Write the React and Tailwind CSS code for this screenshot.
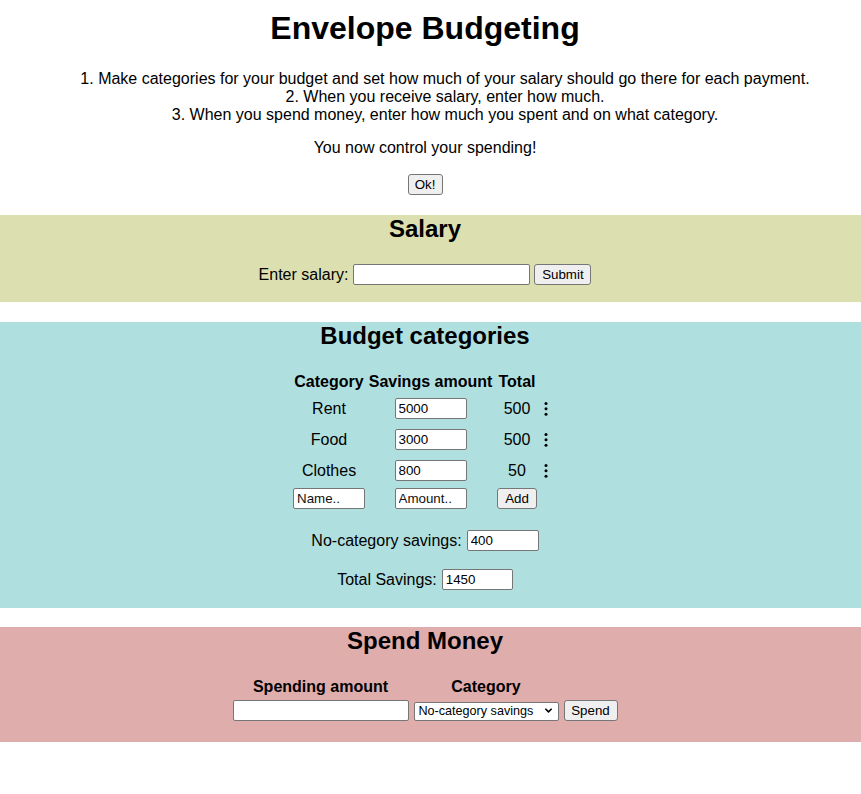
import { useState } from 'react';

const btn =
  'h-[21px] bg-[#efefef] border border-[#767676] rounded-[3px] text-[13.33px] leading-none text-black';
const field =
  'h-[21px] bg-white border border-[#767676] rounded-[2px] px-[3px] text-[13.33px] text-black outline-none placeholder:text-[#111]';

function Kebab() {
  return (
    <svg viewBox="0 0 4 16" className="w-[4px] h-[16px] ml-[3px]">
      <circle cx="2" cy="2.4" r="1.5" fill="#000" />
      <circle cx="2" cy="7.8" r="1.5" fill="#000" />
      <circle cx="2" cy="13.2" r="1.5" fill="#000" />
    </svg>
  );
}

export default function App() {
  const [cats] = useState([
    { name: 'Rent', amount: '5000', total: '500' },
    { name: 'Food', amount: '3000', total: '500' },
    { name: 'Clothes', amount: '800', total: '50' },
  ]);

  return (
    <div className="font-['Liberation_Sans',Arial,sans-serif] text-black text-[16px] pb-[52px]">
      {/* Intro */}
      <div className="w-[850px] text-center pt-[10px]">
        <h1 className="text-[32px] leading-[37px] font-bold">Envelope Budgeting</h1>
        <ol className="mt-[23px] pl-[40px] list-decimal list-inside leading-[18px]">
          <li>Make categories for your budget and set how much of your salary should go there for each payment.</li>
          <li>When you receive salary, enter how much.</li>
          <li>When you spend money, enter how much you spent and on what category.</li>
        </ol>
        <p className="mt-[15px] leading-[18px]">You now control your spending!</p>
        <div className="mt-[17px] flex justify-center">
          <button className={`${btn} w-[35px]`}>Ok!</button>
        </div>
      </div>

      {/* Salary */}
      <section className="mt-[20px] h-[87px] bg-[#dcdfb0]">
        <div className="w-[850px] text-center">
          <h2 className="text-[24px] leading-[28px] font-bold">Salary</h2>
          <div className="mt-[21px] flex items-center justify-center gap-[4.5px]">
            <span className="leading-[18px] mt-[1px]">Enter salary:</span>
            <input className={`${field} w-[177px]`} />
            <button className={`${btn} w-[57px]`}>Submit</button>
          </div>
        </div>
      </section>

      {/* Budget categories */}
      <section className="mt-[20px] h-[286px] bg-[#b0dfdf]">
        <div className="w-[850px] text-center">
          <h2 className="text-[24px] leading-[28px] font-bold">Budget categories</h2>
          <div className="mt-[22px] flex justify-center">
            <div className="grid grid-cols-[74px_125px_44px_17px] grid-rows-[20px_29px_29px_29px_23px] gap-x-[2px] gap-y-[2px] items-center leading-[18px]">
              <div className="font-bold">Category</div>
              <div className="font-bold">Savings amount</div>
              <div className="font-bold">Total</div>
              <div />
              {cats.map((c) => (
                <div key={c.name} className="contents">
                  <div>{c.name}</div>
                  <div className="flex justify-center">
                    <input className={`${field} w-[72px]`} defaultValue={c.amount} />
                  </div>
                  <div>{c.total}</div>
                  <div className="flex">
                    <Kebab />
                  </div>
                </div>
              ))}
              <div className="flex justify-center">
                <input className={`${field} w-[72px]`} placeholder="Name.." />
              </div>
              <div className="flex justify-center">
                <input className={`${field} w-[72px]`} placeholder="Amount.." />
              </div>
              <div className="flex justify-center">
                <button className={`${btn} w-[40px]`}>Add</button>
              </div>
              <div />
            </div>
          </div>
          <div className="mt-[20px] flex items-center justify-center gap-[5px]">
            <span className="leading-[18px] mt-[1px]">No-category savings:</span>
            <input className={`${field} w-[72px]`} defaultValue="400" />
          </div>
          <div className="mt-[18px] flex items-center justify-center gap-[5px]">
            <span className="leading-[18px] mt-[1px]">Total Savings:</span>
            <input className={`${field} w-[71px]`} defaultValue="1450" />
          </div>
        </div>
      </section>

      {/* Spend money */}
      <section className="mt-[19px] h-[115px] bg-[#e0adad]">
        <div className="w-[850px] text-center">
          <h2 className="text-[24px] leading-[28px] font-bold">Spend Money</h2>
          <div className="mt-[23px] flex justify-center">
            <div className="grid grid-cols-[176px_145px_54px] grid-rows-[18px_21px] gap-x-[5px] gap-y-[4px] items-center leading-[18px]">
              <div className="font-bold">Spending amount</div>
              <div className="font-bold">Category</div>
              <div />
              <input className={`${field} w-[176px]`} />
              <div className="relative h-[19px]">
                <select className="appearance-none w-[145px] h-[19px] bg-white border border-[#767676] rounded-[2px] pl-[4px] pr-[2px] text-[12.6px] leading-none text-black outline-none">
                  <option>No-category savings</option>
                  <option>Rent</option>
                  <option>Food</option>
                  <option>Clothes</option>
                </select>
                <svg
                  viewBox="0 0 10 10"
                  className="absolute right-[6px] top-[5px] w-[9px] h-[9px] pointer-events-none"
                >
                  <path d="M1.5 3 L5 6.5 L8.5 3" fill="none" stroke="#000" strokeWidth="1.8" />
                </svg>
              </div>
              <button className={`${btn} w-[54px]`}>Spend</button>
            </div>
          </div>
        </div>
      </section>
    </div>
  );
}
